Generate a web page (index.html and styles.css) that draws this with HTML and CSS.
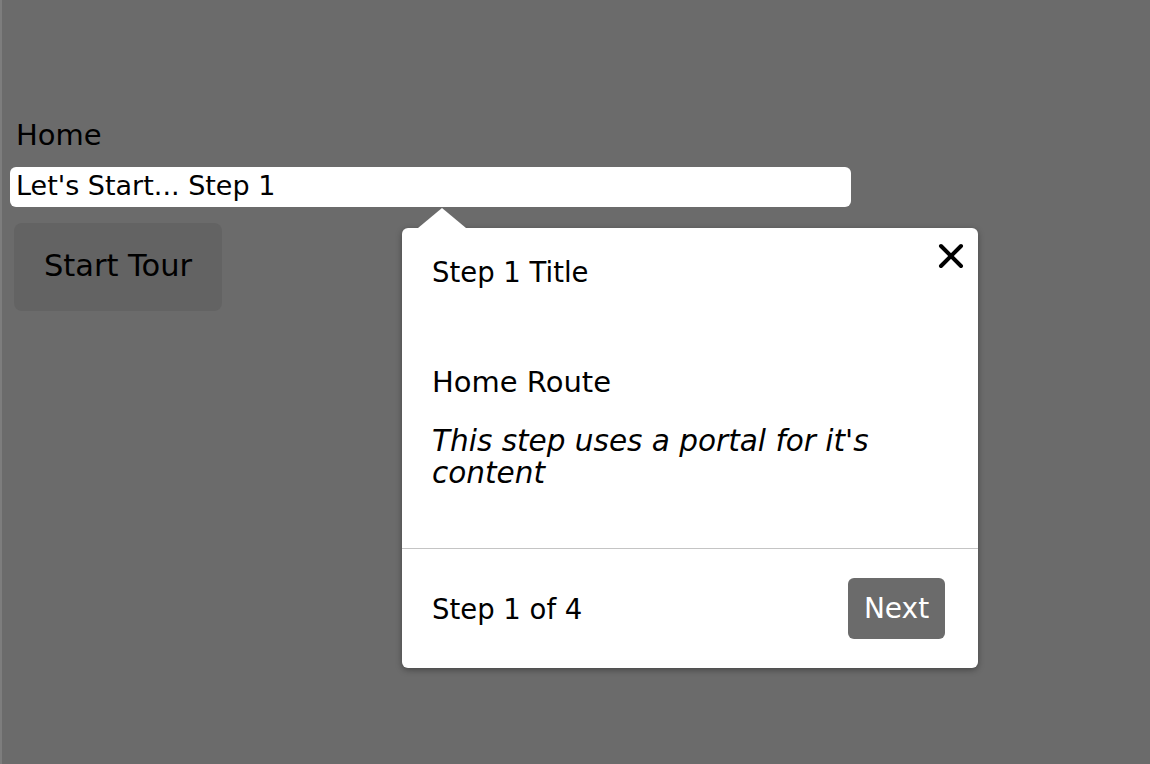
FILE: index.html
```html
<!DOCTYPE html>
<html>
<head>
<meta charset="utf-8">
<link rel="stylesheet" href="styles.css">
</head>
<body>
<div class="edge"></div>
<main class="page">
  <div class="home">Home</div>
  <div class="highlight">Let's Start... Step 1</div>
  <button class="start">Start Tour</button>
</main>
<div class="popover">
  <div class="arrow"></div>
  <button class="close" aria-label="Close">
    <svg width="26" height="26" viewBox="0 0 26 26"><path d="M3 3 L23 23 M23 3 L3 23" stroke="#000" stroke-width="4" stroke-linecap="round"/></svg>
  </button>
  <div class="body">
    <h2 class="title">Step 1 Title</h2>
    <p class="route">Home Route</p>
    <p class="desc">This step uses a portal for it's content</p>
  </div>
  <div class="footer">
    <span class="count">Step 1 of 4</span>
    <button class="next">Next</button>
  </div>
</div>
</body>
</html>
```
FILE: styles.css
```css
html, body {
  margin: 0;
  height: 100%;
}
body {
  background: #6b6b6b;
  font-family: "DejaVu Sans", "Noto Sans", sans-serif;
  color: #000;
  position: relative;
  overflow: hidden;
}
.edge {
  position: absolute;
  left: 0;
  top: 0;
  bottom: 0;
  width: 2px;
  background: #7d7d7d;
}
.page {
  padding: 118px 0 0 10px;
}
.home {
  font-size: 29px;
  line-height: 34px;
  padding-left: 6px;
}
.highlight {
  margin-top: 15px;
  width: 835px;
  height: 40px;
  background: #fff;
  border-radius: 6px;
  padding-left: 6px;
  font-size: 27px;
  line-height: 38px;
}
.start {
  display: block;
  margin: 16px 0 0 4px;
  width: 208px;
  height: 88px;
  border: none;
  border-radius: 8px;
  background: #636363;
  font-family: inherit;
  font-size: 30.5px;
  color: #000;
  padding: 0 0 4px;
}
.popover {
  position: absolute;
  left: 402px;
  top: 228px;
  width: 576px;
  height: 440px;
  background: #fff;
  border-radius: 6px;
  box-shadow: 0 2px 6px rgba(0,0,0,0.35);
  display: flex;
  flex-direction: column;
}
.arrow {
  position: absolute;
  left: 16px;
  top: -20px;
  width: 0;
  height: 0;
  border-left: 24px solid transparent;
  border-right: 24px solid transparent;
  border-bottom: 20px solid #fff;
}
.close {
  position: absolute;
  right: 14px;
  top: 15px;
  padding: 0;
  border: none;
  background: none;
  width: 26px;
  height: 26px;
}
.close svg { display: block; }
.body {
  flex: 1;
  padding: 27px 30px 0;
  border-bottom: 1px solid #c4c4c4;
}
.title {
  margin: 0;
  font-size: 27.5px;
  font-weight: 400;
  line-height: 34px;
}
.route {
  margin: 76px 0 0;
  font-size: 29px;
  line-height: 34px;
}
.desc {
  margin: 26px 0 0;
  font-size: 29.5px;
  line-height: 32px;
  font-style: italic;
  width: 470px;
}
.footer {
  height: 119px;
  display: flex;
  align-items: center;
  justify-content: space-between;
  padding: 0 33px 0 30px;
}
.count {
  font-size: 27.5px;
}
.next {
  width: 97px;
  height: 61px;
  border: none;
  border-radius: 6px;
  background: #6b6b6b;
  color: #fff;
  font-family: inherit;
  font-size: 28px;
  padding: 0;
}
```
